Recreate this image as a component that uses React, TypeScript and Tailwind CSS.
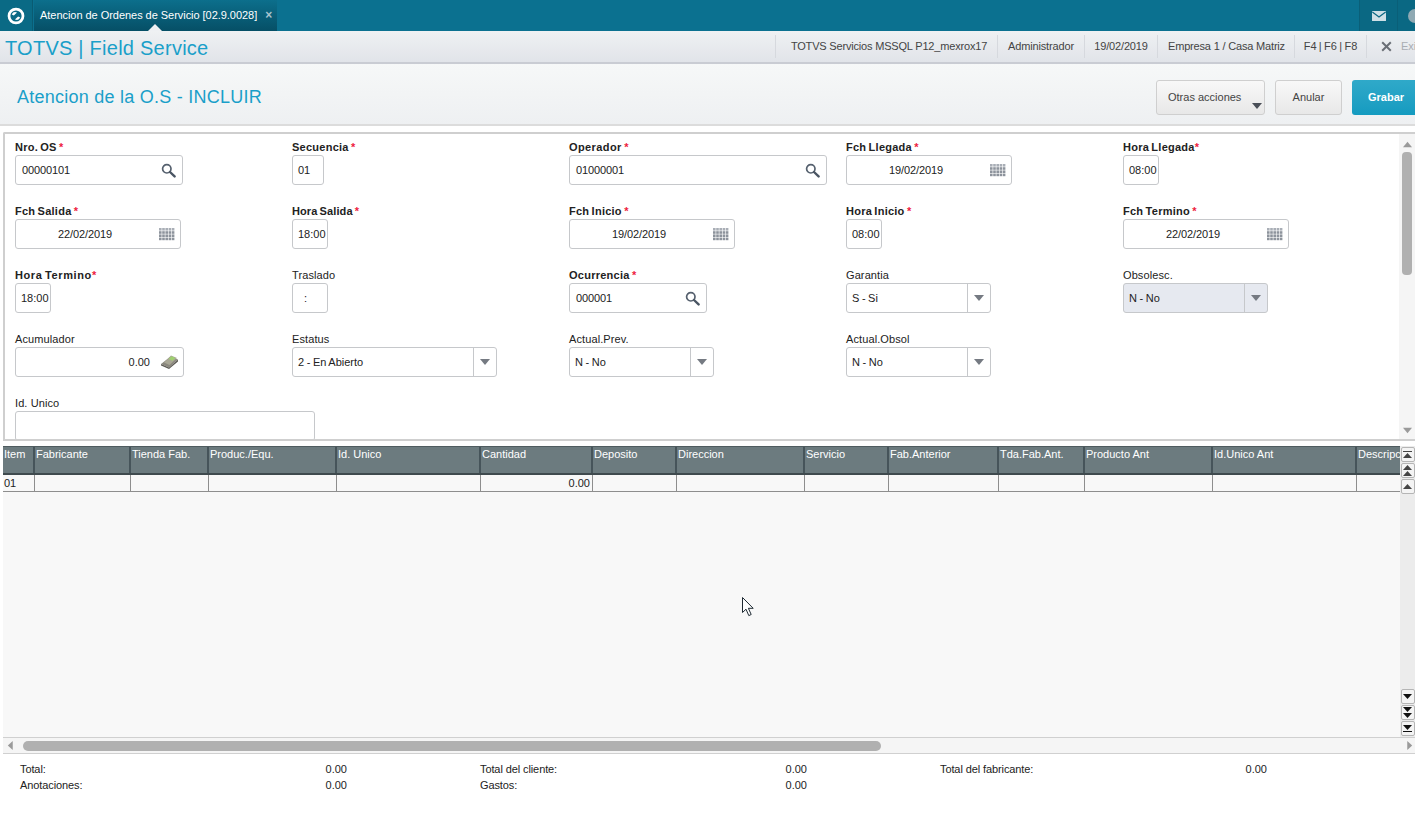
import React from "react";

const font = "font-['Liberation_Sans',Arial,sans-serif]";

function SearchIcon() {
  return (
    <svg width="15" height="15" viewBox="0 0 15 15" className="shrink-0">
      <circle cx="5.8" cy="5.8" r="4.2" fill="none" stroke="#55606e" strokeWidth="1.7" />
      <path d="M9 9l4.6 4.4" stroke="#4a5563" strokeWidth="2.4" strokeLinecap="round" />
    </svg>
  );
}

function CalIcon() {
  const cells: React.ReactNode[] = [];
  for (let r = 0; r < 4; r++)
    for (let c = 0; c < 5; c++)
      cells.push(<rect key={r + "-" + c} x={c * 3.2} y={r * 3.2} width="2.6" height="2.6" fill={r === 0 ? "#a9aeb6" : "#8d939c"} />);
  return (
    <svg width="16" height="13" viewBox="0 0 16 13" className="shrink-0">
      {cells}
    </svg>
  );
}

function MoneyIcon() {
  return (
    <svg width="19" height="16" viewBox="0 0 19 16" className="shrink-0">
      <path d="M1 10L10 3L18 5.5L9 13.5Z" fill="#8b887e" />
      <path d="M1 10L9 13.5L18 5.5V7.5L9 15L1 11.5Z" fill="#5e5c55" />
      <path d="M4 8.5L11 1.5L17 4L9.5 11Z" fill="#a9a796" />
      <path d="M8.5 5L11.5 2.3L15.5 4L12.5 6.8Z" fill="#9fd070" />
    </svg>
  );
}

function Arrow({ dir, color = "#8a8f96", size = 9 }: { dir: "up" | "down" | "left" | "right"; color?: string; size?: number }) {
  const pts = { up: "5,2 10,8 0,8", down: "0,2 10,2 5,8", left: "7.5,0 7.5,10 2,5", right: "2.5,0 2.5,10 8,5" }[dir];
  return (
    <svg width={size} height={size} viewBox="0 0 10 10" className="block">
      <polygon points={pts} fill={color} />
    </svg>
  );
}

function Label({ text, req, tight, cls }: { text: string; req?: boolean; tight?: boolean; cls?: string }) {
  return (
    <div className={`h-4 text-[11px] leading-4 whitespace-nowrap text-[#222] ${req ? "font-bold [word-spacing:-1px]" : ""} ${cls ?? (req ? "tracking-[0.25px]" : "tracking-[0.1px]")}`}>
      {text}
      {req && <span className="text-[#ee1c3e]">{tight ? "*" : " *"}</span>}
    </div>
  );
}

const boxCls = "h-[30px] border border-[#c6c8cb] rounded-[3px] flex items-center text-[11px] text-[#222] whitespace-nowrap";

function TextInput({ w, value, icon }: { w: string; value: string; icon?: boolean }) {
  return (
    <div className={`${w} ${boxCls} bg-white pl-[6px] pr-[6px] justify-between`}>
      <span className="tracking-[-0.1px]">{value}</span>
      {icon && <SearchIcon />}
    </div>
  );
}

function TimeInput({ value, w = "w-9" }: { value: string; w?: string }) {
  return <div className={`${w} ${boxCls} bg-white pl-[5px]`}>{value}</div>;
}

function DateInput({ value }: { value: string }) {
  return (
    <div className={`w-[166px] ${boxCls} bg-white pl-[42px] pr-[5px] justify-between`}>
      <span className="tracking-[-0.1px]">{value}</span>
      <CalIcon />
    </div>
  );
}

function Select({ w, value, disabled }: { w: string; value: string; disabled?: boolean }) {
  return (
    <div className={`${w} ${boxCls} pl-[5px] justify-between ${disabled ? "bg-[#e6e9f0]" : "bg-white"}`}>
      <span className="[word-spacing:-0.5px]">{value}</span>
      <div className="w-[23px] h-[28px] border-l border-[#c6c8cb] flex items-center justify-center">
        <Arrow dir="down" color="#757a82" size={10} />
      </div>
    </div>
  );
}

function F({ label, req, tight, cls, children }: { label: string; req?: boolean; tight?: boolean; cls?: string; children: React.ReactNode }) {
  return (
    <div className="w-[277px] h-16 shrink-0">
      <Label text={label} req={req} tight={tight} cls={cls} />
      {children}
    </div>
  );
}

function FormRow({ children }: { children: React.ReactNode }) {
  return <div className="flex">{children}</div>;
}

const cols = ["Item", "Fabricante", "Tienda Fab.", "Produc./Equ.", "Id. Unico", "Cantidad", "Deposito", "Direccion", "Servicio", "Fab.Anterior", "Tda.Fab.Ant.", "Producto Ant", "Id.Unico Ant", "Descripc"];
const gridCols = "grid grid-cols-[32px_96px_78px_128px_144px_112px_84px_128px_84px_110px_86px_128px_144px_44px]";

function Flat({ dir, color }: { dir: "up" | "down"; color: string }) {
  return (
    <svg width="9" height="5" viewBox="0 0 9 5" className="block">
      <polygon points={dir === "up" ? "4.5,0 9,5 0,5" : "0,0 9,0 4.5,5"} fill={color} />
    </svg>
  );
}

function ScrollBtn({ n, dir, bar }: { n: number; dir: "up" | "down"; bar?: boolean }) {
  const color = dir === "up" ? "#444" : "#111";
  const arrows = Array.from({ length: n }).map((_, i) => (
    <div key={i} className={i > 0 ? "mt-px" : ""}>
      <Flat dir={dir} color={color} />
    </div>
  ));
  return (
    <div className="w-[14px] h-[15px] bg-[#f4f4f4] border border-[#b5b5b5] rounded-[2px] flex flex-col items-center justify-center">
      {bar && dir === "up" && <div className="w-[9px] h-px mb-px bg-[#444]" />}
      {arrows}
      {bar && dir === "down" && <div className="w-[9px] h-px mt-px bg-[#111]" />}
    </div>
  );
}

function Total({ label, value }: { label: string; value: string }) {
  return (
    <div className="w-[460px] pl-5 shrink-0">
      <div className="w-[327px] flex justify-between text-[11px] leading-4 text-[#222]">
        <span className="tracking-[-0.1px]">{label}</span>
        <span>{value}</span>
      </div>
    </div>
  );
}

function HeadInfo({ text, w }: { text: string; w: string }) {
  return (
    <div className={`${w} h-[23px] border-r border-[#d6d9de] flex items-center justify-center text-[11px] text-[#444] whitespace-nowrap`}>
      {text}
    </div>
  );
}

export default function App() {
  return (
    <div className={`${font} w-[1415px] h-[821px] overflow-hidden bg-white flex flex-col relative`}>
      {/* top bar */}
      <div className="h-[31px] bg-[#0b7190] flex shrink-0">
        <div className="w-[33px] bg-[#0a6a85] border-r border-[#0a5b72] flex items-center justify-center">
          <svg width="18" height="18" viewBox="0 0 17 17">
            <circle cx="8.5" cy="8.5" r="6.6" fill="none" stroke="#fff" strokeWidth="2.6" />
            <path d="M4.5 7Q6 3.8 9.5 5.2L6.5 8Z" fill="#fff" />
            <path d="M12.5 10Q11 13.2 7.5 11.8L10.5 9Z" fill="#fff" />
          </svg>
        </div>
        <div className="ml-px w-[243px] bg-gradient-to-b from-[#0c6f8c] to-[#064f66] relative flex items-center pl-[6px] text-[11px] text-white whitespace-nowrap">
          <span className="tracking-[-0.04px]">Atencion de Ordenes de Servicio [02.9.0028]</span>
          <span className="ml-[8px] text-[#a9c4ce] text-[12px] leading-none font-bold -mt-[2px]">×</span>
          <div className="absolute left-[114px] bottom-0 w-0 h-0 border-l-[7px] border-r-[7px] border-b-[7px] border-l-transparent border-r-transparent border-b-[#eef0f3]" />
        </div>
        <div className="flex-1" />
        <div className="w-[39px] bg-[#0a6883] border-x border-[#0a5f78] flex items-center justify-center">
          <svg width="14" height="10" viewBox="0 0 14 10">
            <rect width="14" height="10" rx="0.5" fill="#cfe0e6" />
            <path d="M0.3 1L7 6L13.7 1" fill="none" stroke="#0a6883" strokeWidth="1.3" />
          </svg>
        </div>
        <div className="w-[17px] bg-[#0a6883] overflow-hidden flex items-center pl-[10px]">
          <div className="w-[14px] h-[14px] rounded-full bg-[#8fa9b3] shrink-0" />
        </div>
      </div>

      {/* header */}
      <div className="h-[33px] shrink-0 bg-gradient-to-b from-[#eff1f3] to-[#e1e4e9] border-b-2 border-[#c9ccd3] flex items-center overflow-hidden">
        <div className="w-[775px] pl-[5px] pt-[2px] text-[20px] text-[#1a9fc9] whitespace-nowrap tracking-[0.25px] shrink-0">TOTVS | Field Service</div>
        <div className="w-px h-[23px] bg-[#d6d9de] shrink-0" />
        <HeadInfo w="w-[222px] shrink-0 pl-[5px] tracking-[-0.18px]" text="TOTVS Servicios MSSQL P12_mexrox17" />
        <HeadInfo w="w-[87px] shrink-0 tracking-[-0.15px]" text="Administrador" />
        <HeadInfo w="w-[73px] shrink-0 tracking-[-0.15px]" text="19/02/2019" />
        <HeadInfo w="w-[137px] shrink-0 pl-[1px] tracking-[-0.18px]" text="Empresa 1 / Casa Matriz" />
        <HeadInfo w="w-[72px] shrink-0 [word-spacing:-0.7px]" text="F4 | F6 | F8" />
        <div className="pl-[14px] flex items-center gap-[9px] shrink-0">
          <svg width="11" height="11" viewBox="0 0 11 11">
            <path d="M1.2 1.2L9.8 9.8M9.8 1.2L1.2 9.8" stroke="#6a6f76" strokeWidth="2" />
          </svg>
          <span className="text-[11px] text-[#a9adb3]">Exi</span>
        </div>
      </div>

      {/* sub header */}
      <div className="h-[62px] shrink-0 bg-gradient-to-b from-[#f6f8f8] to-[#eef0f2] border-b-2 border-[#dcdcdc] flex items-center justify-between overflow-hidden pl-[17px]">
        <div className="text-[18px] text-[#1a9fc9] tracking-[0.25px] whitespace-nowrap mt-[6px]">Atencion de la O.S - INCLUIR</div>
        <div className="flex gap-[10px] -mr-[8px] mt-[7px]">
          <div className="w-[109px] h-[35px] relative bg-gradient-to-b from-[#f8f8f8] to-[#e8e8e8] border border-[#cfcfcf] rounded-[3px] flex items-center pl-[11px] text-[11px] text-[#444]">
            Otras acciones
            <div className="absolute right-[2px] bottom-[3px]">
              <Arrow dir="down" color="#4a4f58" size={10} />
            </div>
          </div>
          <div className="w-[67px] h-[35px] bg-gradient-to-b from-[#f8f8f8] to-[#e8e8e8] border border-[#cfcfcf] rounded-[3px] flex items-center justify-center text-[11px] text-[#444]">
            Anular
          </div>
          <div className="w-[71px] h-[35px] bg-gradient-to-b from-[#2fa9c9] to-[#149bc0] rounded-[3px] flex items-center pl-[16px] text-[11px] font-bold text-white">
            Grabar
          </div>
        </div>
      </div>

      {/* form */}
      <div className="h-[309px] mt-[6px] ml-[3px] shrink-0 border-t-2 border-l-2 border-b-2 border-[#cfcfcf] flex overflow-hidden rounded-tl-[2px]">
        <div className="flex-1 pl-[10px] pt-[5px] min-w-0 overflow-hidden bg-white">
          <FormRow>
            <F label="Nro. OS" req><TextInput w="w-[168px]" value="00000101" icon /></F>
            <F label="Secuencia" req><TimeInput w="w-8" value="01" /></F>
            <F label="Operador" req cls="tracking-[0.4px]"><TextInput w="w-[258px]" value="01000001" icon /></F>
            <F label="Fch Llegada" req><DateInput value="19/02/2019" /></F>
            <F label="Hora Llegada" req tight><TimeInput value="08:00" /></F>
          </FormRow>
          <FormRow>
            <F label="Fch Salida" req><DateInput value="22/02/2019" /></F>
            <F label="Hora Salida" req cls="tracking-[0.1px]"><TimeInput value="18:00" /></F>
            <F label="Fch Inicio" req><DateInput value="19/02/2019" /></F>
            <F label="Hora Inicio" req><TimeInput value="08:00" /></F>
            <F label="Fch Termino" req><DateInput value="22/02/2019" /></F>
          </FormRow>
          <FormRow>
            <F label="Hora Termino" req tight cls="tracking-[0.6px]"><TimeInput value="18:00" /></F>
            <F label="Traslado">
              <div className={`w-9 ${boxCls} bg-white pl-[11px]`}>:</div>
            </F>
            <F label="Ocurrencia" req><TextInput w="w-[138px]" value="000001" icon /></F>
            <F label="Garantia"><Select w="w-[145px]" value="S - Si" /></F>
            <F label="Obsolesc."><Select w="w-[145px]" value="N - No" disabled /></F>
          </FormRow>
          <FormRow>
            <F label="Acumulador">
              <div className={`w-[169px] ${boxCls} bg-white justify-end pr-[4px] gap-[10px]`}>
                <span>0.00</span>
                <MoneyIcon />
              </div>
            </F>
            <F label="Estatus"><Select w="w-[205px]" value="2 - En Abierto" /></F>
            <F label="Actual.Prev."><Select w="w-[145px]" value="N - No" /></F>
            <F label="Actual.Obsol"><Select w="w-[145px]" value="N - No" /></F>
          </FormRow>
          <FormRow>
            <F label="Id. Unico">
              <div className={`w-[300px] ${boxCls} bg-white`} />
            </F>
          </FormRow>
        </div>
        <div className="w-4 shrink-0 bg-[#f5f5f5] flex flex-col items-center pt-[6px] pb-[4px]">
          <Arrow dir="up" color="#9a9a9a" size={9} />
          <div className="w-[10px] h-[123px] mt-[3px] rounded-[4px] bg-[#b0b0b0]" />
          <div className="flex-1" />
          <Arrow dir="down" color="#9a9a9a" size={9} />
        </div>
      </div>

      {/* grid */}
      <div className="h-[291px] mt-[5px] ml-[3px] shrink-0 flex bg-[#f8f8f8]">
        <div className="w-[1397px] shrink-0 overflow-hidden">
          <div className={`${gridCols} h-[29px] bg-[#6c7b7f] border-t border-[#4f5c60] border-b-2 border-b-[#3f4a4e] text-[11px] text-white leading-[14px]`}>
            {cols.map((c, i) => (
              <div key={c} className={`pl-px whitespace-nowrap overflow-hidden ${i < cols.length - 1 ? "border-r-2 border-[#46545a]" : ""}`}>
                {c}
              </div>
            ))}
          </div>
          <div className={`${gridCols} h-[17px] bg-[#f8f8f8] border-b border-[#8e8e8e] text-[11px] text-[#222] leading-[16px]`}>
            {cols.map((c, i) => (
              <div key={c} className={`pl-px pr-[2px] whitespace-nowrap overflow-hidden ${i === 5 ? "text-right" : ""} ${i < cols.length - 1 ? "border-r border-[#8e8e8e]" : ""}`}>
                {i === 0 ? "01" : i === 5 ? "0.00" : ""}
              </div>
            ))}
          </div>
        </div>
        <div className="flex-1 bg-[#ececec] flex flex-col justify-between items-center pb-[1px] pt-px">
          <div className="flex flex-col gap-px">
            <ScrollBtn n={1} dir="up" bar />
            <ScrollBtn n={2} dir="up" />
            <ScrollBtn n={1} dir="up" />
          </div>
          <div className="flex flex-col gap-px">
            <ScrollBtn n={1} dir="down" />
            <ScrollBtn n={2} dir="down" />
            <ScrollBtn n={1} dir="down" bar />
          </div>
        </div>
      </div>

      {/* horizontal scrollbar */}
      <div className="h-[17px] ml-[3px] shrink-0 bg-[#f5f5f5] border-y border-[#d0d0d0] flex items-center">
        <div className="w-[8px] ml-[3px]">
          <Arrow dir="left" color="#9a9a9a" size={9} />
        </div>
        <div className="w-[858px] h-[10px] ml-[9px] rounded-[5px] bg-[#b0b0b0]" />
        <div className="flex-1" />
        <div className="mr-[1px]">
          <Arrow dir="right" color="#9a9a9a" size={9} />
        </div>
      </div>

      {/* totals */}
      <div className="pt-[7px] flex flex-col">
        <div className="flex">
          <Total label="Total:" value="0.00" />
          <Total label="Total del cliente:" value="0.00" />
          <Total label="Total del fabricante:" value="0.00" />
        </div>
        <div className="flex">
          <Total label="Anotaciones:" value="0.00" />
          <Total label="Gastos:" value="0.00" />
        </div>
      </div>

      {/* mouse cursor */}
      <svg width="13" height="20" viewBox="0 0 13 20" className="absolute left-[742px] top-[597px]">
        <path d="M0.5 0.5V15.5L4 12.2L6.8 18.6L9.2 17.5L6.4 11.3H11.2Z" fill="#fff" stroke="#1f2a33" strokeWidth="1" />
      </svg>
    </div>
  );
}
